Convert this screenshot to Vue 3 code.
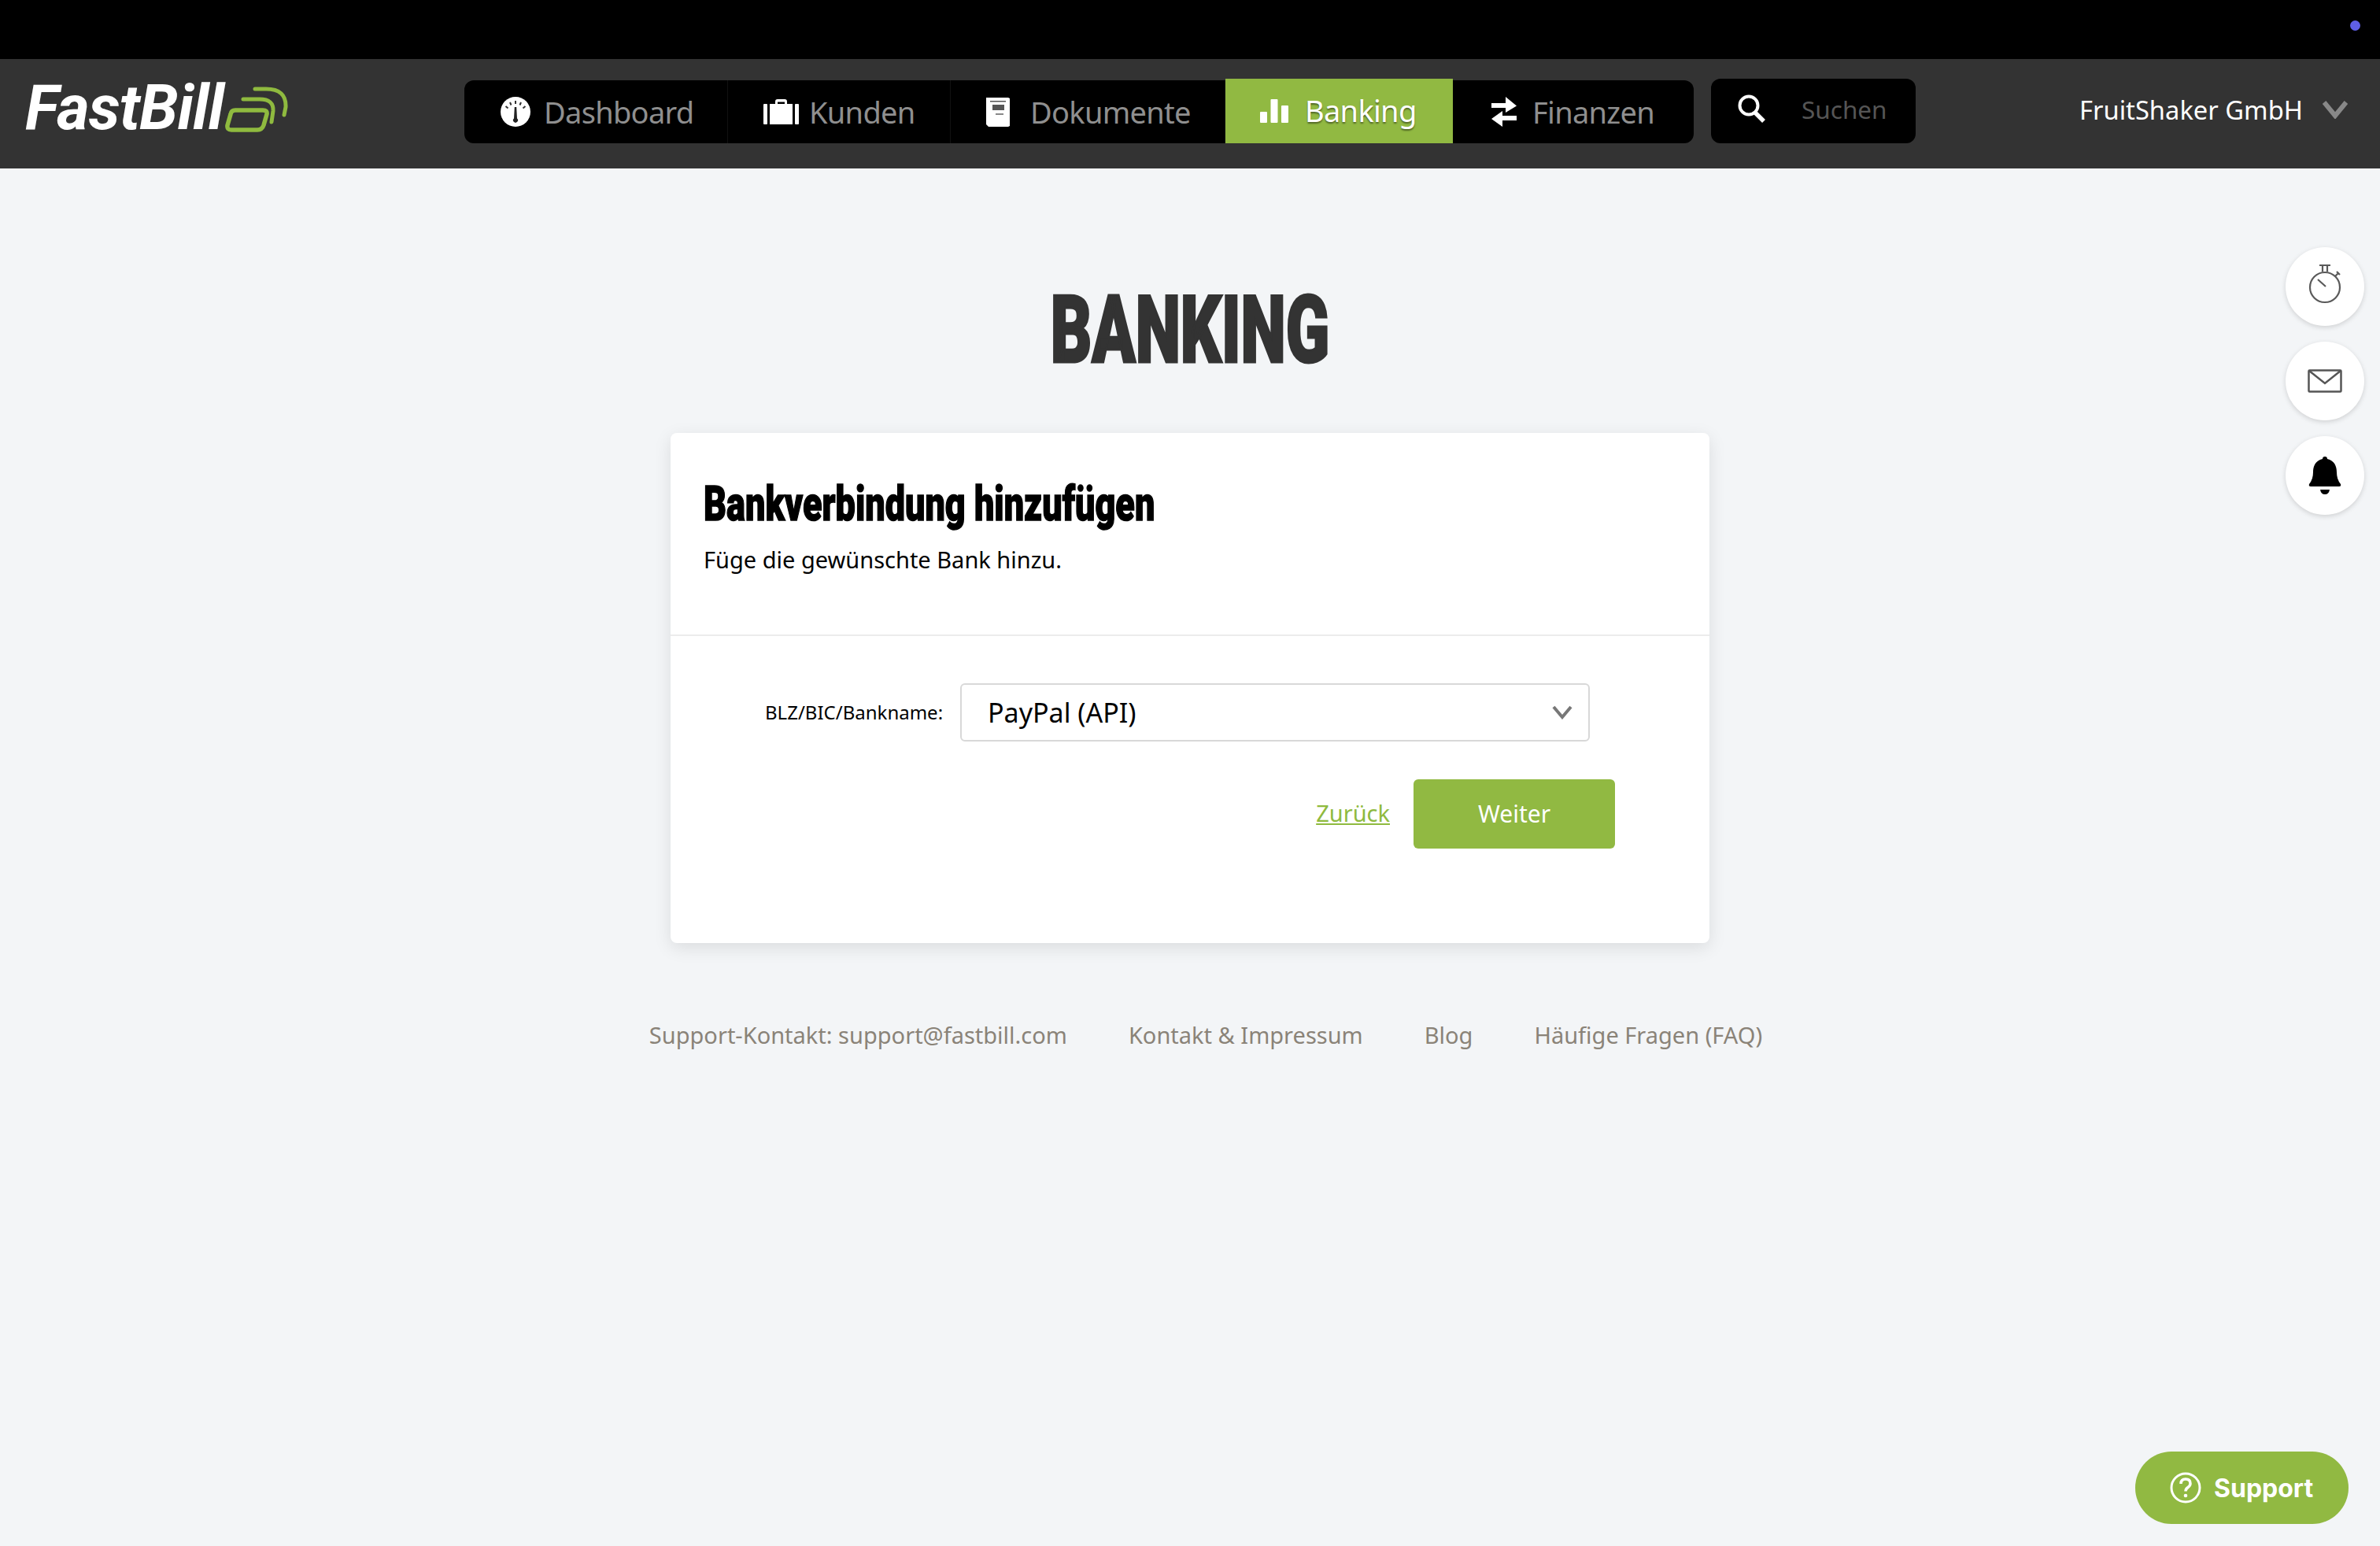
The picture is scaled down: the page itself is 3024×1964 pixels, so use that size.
<template>
  <div class="page">
    <div class="topbar"><span class="dot"></span></div>

    <header class="header">
      <div class="logo">
        <span class="logo_text">FastBill</span>
        <svg class="logo_mark" width="80" height="60" viewBox="0 0 80 60" fill="none" stroke="#8fba3f" stroke-linecap="round">
          <path d="M13 32H48Q54 32 53 37L49 51Q47 57 41 57H8Q2 57 3 51L7 37Q8 32 13 32Z" stroke-width="5.500" />
          <path d="M23 18H44Q62 18 61 33L59 47" stroke-width="5" />
          <path d="M38 5H52Q78 5 77 28L75 38" stroke-width="5" />
        </svg>
      </div>

      <nav class="nav">
        <a v-for="item in navItems" :key="item.label" class="nav_item" :class="[item.icon, { active: item.active }]">
          <svg v-if="item.icon === 'gauge'" width="38" height="38" viewBox="0 0 38 38">
            <circle cx="19" cy="19" r="19" fill="#fff" />
            <path d="M19 5v4M12 7l1.500 3.500M26 7l-1.500 3.500M6.500 12l3 2.500M31.500 12l-3 2.500" stroke="#333" stroke-width="2" />
            <path d="M17.800 13h2.400l.8 14.500a3 3 0 1 1-4 0z" fill="#222" />
          </svg>
          <svg v-else-if="item.icon === 'case'" width="45" height="32" viewBox="0 0 45 32">
            <path d="M15 6V3q0-3 3-3h9q3 0 3 3v3h-3V3.500h-9V6z" fill="#fff" />
            <rect x="0" y="6" width="5" height="26" rx="1" fill="#fff" />
            <rect x="8" y="6" width="29" height="26" fill="#fff" />
            <rect x="40" y="6" width="5" height="26" rx="1" fill="#fff" />
          </svg>
          <svg v-else-if="item.icon === 'doc'" width="32" height="38" viewBox="0 0 32 38">
            <path d="M1 1h28l2 1v35l-2 1H4l-3-3z" fill="#fff" />
            <path d="M6 5h20v1.500H6zM9 10h15v7H9z" fill="#555" />
            <path d="M13 21h10v2H13z" fill="#888" />
          </svg>
          <svg v-else-if="item.icon === 'bars'" width="36" height="30" viewBox="0 0 36 30">
            <rect x="0" y="16" width="9" height="14" rx="1" fill="#fff" />
            <rect x="13.500" y="0" width="9" height="30" rx="1" fill="#fff" />
            <rect x="27" y="8" width="9" height="22" rx="1" fill="#fff" />
          </svg>
          <svg v-else width="32" height="38" viewBox="0 0 32 38">
            <path d="M0 8h18V0l14 11.500L18 20v-6H0z" fill="#fff" />
            <path d="M32 24H14v-6L0 28l14 10v-8h18z" fill="#fff" />
          </svg>
          <span>{{ item.label }}</span>
        </a>
      </nav>

      <div class="search">
        <svg width="36" height="36" viewBox="0 0 36 36" fill="none" stroke="#fff">
          <circle cx="14" cy="14" r="11.500" stroke-width="4" />
          <path d="M22 23l11 11" stroke-width="5.500" />
        </svg>
        <span class="search_text">Suchen</span>
      </div>

      <div class="company">
        <span>FruitShaker GmbH</span>
        <svg width="32" height="24" viewBox="0 0 32 24" fill="none" stroke="#888" stroke-width="6">
          <path d="M2 3l14 17L30 3" />
        </svg>
      </div>
    </header>

    <main class="main">
      <h1 class="page_title"><span>BANKING</span></h1>

      <section class="card">
        <div class="card_head">
          <h2 class="card_title">Bankverbindung hinzufügen</h2>
          <p class="card_sub">Füge die gewünschte Bank hinzu.</p>
        </div>
        <div class="card_body">
          <div class="form_row">
            <label class="form_label">BLZ/BIC/Bankname:</label>
            <div class="select">
              <span>PayPal (API)</span>
              <svg width="26" height="18" viewBox="0 0 26 18" fill="none" stroke="#777" stroke-width="4">
                <path d="M2 2l11 13L24 2" />
              </svg>
            </div>
          </div>
          <div class="actions">
            <a class="back">Zurück</a>
            <button class="next">Weiter</button>
          </div>
        </div>
      </section>

      <footer class="footer">
        <a v-for="link in footerLinks" :key="link">{{ link }}</a>
      </footer>
    </main>

    <div class="side_buttons">
      <div class="side_btn">
        <svg class="watch" width="44" height="50" viewBox="0 0 44 50" fill="none" stroke="#5a5a5a" stroke-width="2.200">
          <circle cx="22" cy="29" r="19" />
          <path d="M15 1h14M19 1v8M25 1v8M35 15l4-4M37 9l4 4M13 19l10 9" />
        </svg>
      </div>
      <div class="side_btn">
        <svg width="44" height="30" viewBox="0 0 44 30" fill="none" stroke="#555" stroke-width="2.500">
          <rect x="1.500" y="1.500" width="41" height="27" rx="1" />
          <path d="M2 2l20 16L42 2" />
        </svg>
      </div>
      <div class="side_btn">
        <svg width="42" height="48" viewBox="0 0 42 48">
          <path d="M21 0q3 0 3 3c9 2 12 9 12 17q0 9 5 15q1 3-2 3H3q-3 0-2-3q5-6 5-15c0-8 3-15 12-17q0-3 3-3z" fill="#000" />
          <path d="M15 42h12q-1 6-6 6t-6-6z" fill="#000" />
        </svg>
      </div>
    </div>

    <button class="support">
      <svg width="40" height="40" viewBox="0 0 40 40" fill="none" stroke="#fff">
        <circle cx="20" cy="20" r="18" stroke-width="3" />
        <path d="M14 15q0-6 6-6t6 5.500q0 3-3 5-3 2-3 5" stroke-width="3.500" />
        <circle cx="20" cy="30" r="2.300" fill="#fff" stroke="none" />
      </svg>
      <span>Support</span>
    </button>
  </div>
</template>

<script setup>
const navItems = [
  { label: 'Dashboard', icon: 'gauge' },
  { label: 'Kunden', icon: 'case' },
  { label: 'Dokumente', icon: 'doc' },
  { label: 'Banking', icon: 'bars', active: true },
  { label: 'Finanzen', icon: 'arrows' }
];

const footerLinks = [
  'Support-Kontakt: support@fastbill.com',
  'Kontakt & Impressum',
  'Blog',
  'Häufige Fragen (FAQ)'
];
</script>

<style>
html,
body {
  margin: 0;
  background: #f3f5f7;
}
</style>

<style scoped>
.page {
  position: relative;
  min-height: 1964px;
  background: #f3f5f7;
  font-family: "Noto Sans", sans-serif;
  overflow: hidden;
}

.topbar {
  position: relative;
  height: 75px;
  background: #000;
}

.dot {
  position: absolute;
  top: 26px;
  left: 2986px;
  width: 13px;
  height: 13px;
  border-radius: 50%;
  background: #5f5fe6;
}

.header {
  display: flex;
  height: 139px;
  padding-top: 25px;
  box-sizing: border-box;
  background: #333;
}

.logo {
  display: flex;
  align-items: flex-end;
  flex: none;
  width: 590px;
  height: 75px;
  padding-left: 32px;
  box-sizing: border-box;
}

.logo_text {
  color: #fff;
  font-family: Roboto, sans-serif;
  font-weight: 700;
  font-style: italic;
  font-size: 80px;
  line-height: 75px;
  letter-spacing: -1px;
}

.logo_mark {
  margin: 0 0 7px 2px;
}

.nav {
  display: flex;
  flex: none;
  height: 80px;
  margin-top: 2px;
  border-radius: 12px;
  background: #000;
}

.nav_item {
  display: flex;
  align-items: center;
  flex: none;
  box-sizing: border-box;
  color: #8f8f8f;
  font-size: 38px;
  letter-spacing: -0.700px;
  white-space: nowrap;
  border-right: 1px solid #111;
}

.gauge {
  width: 335px;
  padding-left: 46px;
  gap: 17px;
}

.case {
  width: 283px;
  padding-left: 45px;
  gap: 13px;
}

.doc {
  width: 349px;
  padding-left: 44px;
  gap: 25px;
}

.bars {
  width: 289px;
  padding-left: 44px;
  gap: 21px;
}

.arrows {
  width: 306px;
  padding-left: 49px;
  gap: 20px;
  border-right: none;
}

.nav_item.active {
  height: 82px;
  margin-top: -2px;
  color: #fff;
  background: #91b942;
  text-shadow: 0 2px 2px rgba(0, 0, 0, 0.45);
  border-right: none;
}

.nav_item.active span {
  margin-bottom: 2px;
}

.search {
  display: flex;
  align-items: center;
  flex: none;
  gap: 45px;
  width: 260px;
  height: 82px;
  margin-left: 22px;
  padding: 0 0 6px 34px;
  box-sizing: border-box;
  border-radius: 12px;
  background: #000;
}

.search_text {
  color: #555;
  font-size: 31.500px;
}

.company {
  display: flex;
  align-items: center;
  flex: none;
  gap: 25px;
  height: 78px;
  margin-left: 208px;
  color: #fff;
  font-size: 32.700px;
}

.main {
  display: flex;
  flex-direction: column;
  align-items: center;
}

.page_title {
  margin: 136px 0 0;
  height: 200px;
  color: #333;
  font-family: Roboto, sans-serif;
  font-weight: 900;
  font-size: 118px;
  line-height: 140px;
}

.page_title span {
  display: block;
  transform: scaleX(0.69);
  -webkit-text-stroke: 3px #333;
}

.card {
  width: 1320px;
  height: 648px;
  border-radius: 8px;
  background: #fff;
  box-shadow: 0 6px 22px rgba(0, 0, 0, 0.1);
}

.card_head {
  height: 258px;
  padding: 50px 42px 0;
  box-sizing: border-box;
  border-bottom: 2px solid #ececec;
}

.card_title {
  margin: 0;
  color: #000;
  font-family: Roboto, sans-serif;
  font-weight: 900;
  font-size: 62px;
  line-height: 80px;
  white-space: nowrap;
  transform: scaleX(0.726);
  transform-origin: left center;
  -webkit-text-stroke: 1.500px #000;
}

.card_sub {
  margin: 10px 0 0;
  color: #000;
  font-size: 29px;
  line-height: 42px;
}

.card_body {
  padding: 60px 120px 0 120px;
}

.form_row {
  display: flex;
  align-items: center;
  gap: 19px;
  padding-right: 32px;
}

.form_label {
  flex: none;
  width: 229px;
  margin-bottom: 2px;
  color: #000;
  font-size: 24px;
  white-space: nowrap;
}

.select {
  display: flex;
  flex: 1;
  align-items: center;
  justify-content: space-between;
  height: 74px;
  padding: 0 20px 0 33px;
  box-sizing: border-box;
  border: 2px solid #d8d8d8;
  border-radius: 6px;
  color: #000;
  font-size: 34px;
}

.actions {
  display: flex;
  align-items: center;
  justify-content: flex-end;
  gap: 30px;
  margin-top: 48px;
}

.back {
  margin-bottom: 3px;
  color: #8fba3f;
  font-size: 29px;
  text-decoration: underline;
}

.next {
  width: 256px;
  height: 88px;
  padding: 0 0 2px;
  border: none;
  border-radius: 6px;
  color: #fff;
  background: #91b942;
  font-family: inherit;
  font-size: 30px;
}

.footer {
  display: flex;
  gap: 78px;
  margin-top: 95px;
  padding-left: 40px;
  color: #8a8378;
  font-size: 29px;
  line-height: 44px;
}

.side_buttons {
  position: absolute;
  top: 314px;
  left: 2904px;
  display: flex;
  flex-direction: column;
  gap: 20px;
}

.side_btn {
  display: flex;
  align-items: center;
  justify-content: center;
  width: 100px;
  height: 100px;
  border-radius: 50%;
  background: #fff;
  box-shadow: 0 2px 6px rgba(0, 0, 0, 0.15);
}

.watch {
  margin-bottom: 6px;
}

.support {
  position: absolute;
  top: 1844px;
  left: 2713px;
  display: flex;
  align-items: center;
  gap: 16px;
  width: 271px;
  height: 92px;
  padding: 0 0 0 44px;
  box-sizing: border-box;
  border: none;
  border-radius: 46px;
  color: #fff;
  background: #91b942;
  font-family: Inter, sans-serif;
  font-weight: 700;
  font-size: 32px;
}
</style>
